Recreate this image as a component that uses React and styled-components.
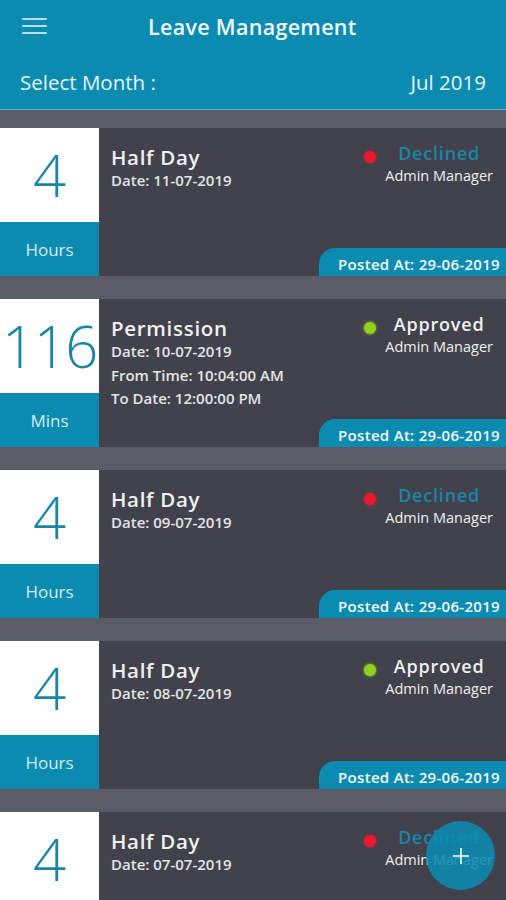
import React from "react";
import styled, { createGlobalStyle } from "styled-components";

const Global = createGlobalStyle`
  html, body { margin: 0; padding: 0; background: #5a5c67; }
  body { font-family: "Open Sans", "Noto Sans", sans-serif; overflow: hidden; }
  * { box-sizing: border-box; }
`;

const Page = styled.div`
  width: 506px;
  height: 900px;
  overflow: hidden;
  background: #5a5c67;
  position: relative;
`;

const Header = styled.header`
  background: #0b8bb0;
  border-bottom: 1px solid #5fb3cc;
`;

const TopBar = styled.div`
  height: 55px;
  display: flex;
  align-items: center;
  padding-left: 22px;
`;

const Burger = styled.div`
  width: 25px;
  display: flex;
  flex-direction: column;
  gap: 4.5px;
  margin-top: -3px;
  span {
    display: block;
    height: 2.5px;
    background: #bcdde8;
    border-radius: 1px;
  }
`;

const Title = styled.h1`
  margin: -2px 0 0 101px;
  font-size: 21.5px;
  font-weight: 600;
  color: #eef7fa;
  letter-spacing: 0.3px;
`;

const MonthRow = styled.div`
  height: 54px;
  display: flex;
  align-items: center;
  justify-content: space-between;
  padding: 0 20px 0 20px;
  color: #e6f3f7;
  font-size: 20.5px;
`;

const List = styled.div`
  display: flex;
  flex-direction: column;
  gap: 23px;
  padding-top: 18px;
`;

const Card = styled.div`
  height: 148px;
  display: flex;
  background: #41424c;
`;

const Amount = styled.div`
  width: 99px;
  display: flex;
  flex-direction: column;
`;

const Value = styled.div`
  height: 94px;
  background: #ffffff;
  color: #1b84a6;
  font-size: 58px;
  font-weight: 300;
  display: flex;
  align-items: center;
  justify-content: center;
  letter-spacing: ${(p) => (p.$long ? "-1.5px" : "0")};
  line-height: 1;
`;

const Unit = styled.div`
  flex: 1;
  background: #0b8bb0;
  color: #d5ebf2;
  font-size: 17px;
  display: flex;
  align-items: center;
  justify-content: center;
`;

const Body = styled.div`
  flex: 1;
  display: flex;
  flex-direction: column;
  padding: 16px 0 0 12px;
`;

const Top = styled.div`
  display: flex;
  justify-content: space-between;
  align-items: flex-start;
`;

const Info = styled.div`
  display: flex;
  flex-direction: column;
  color: #f1f1f1;
`;

const Kind = styled.div`
  font-size: 20.5px;
  font-weight: 600;
  letter-spacing: 0.7px;
  line-height: 26px;
`;

const Line = styled.div`
  font-size: 15px;
  font-weight: 600;
  color: #e4e4e6;
  line-height: 23.5px;
  margin-top: ${(p) => (p.$first ? "-1px" : "0")};
`;

const Status = styled.div`
  display: flex;
  align-items: flex-start;
  padding-right: 13px;
  margin-top: -4px;
`;

const Dot = styled.span`
  width: 12px;
  height: 12px;
  border-radius: 50%;
  background: ${(p) => p.$color};
  margin-top: 11px;
  margin-right: 9px;
  box-shadow: 0 0 3px ${(p) => p.$color};
`;

const StatusText = styled.div`
  display: flex;
  flex-direction: column;
  align-items: center;
`;

const StatusName = styled.div`
  font-size: 18px;
  font-weight: 600;
  letter-spacing: 0.8px;
  color: ${(p) => p.$color};
  line-height: 26px;
`;

const Manager = styled.div`
  font-size: 14.5px;
  color: #efefef;
  line-height: 20px;
`;

const Posted = styled.div`
  margin-top: auto;
  align-self: flex-end;
  height: 28px;
  padding: 3px 6px 0 19px;
  background: #0b8bb0;
  border-radius: 16px 0 0 0;
  color: #f2f9fb;
  font-size: 15px;
  font-weight: 600;
  letter-spacing: 0.3px;
  display: flex;
  align-items: center;
`;

const Fab = styled.button`
  position: absolute;
  right: 11px;
  bottom: 10px;
  width: 69px;
  height: 69px;
  border-radius: 50%;
  border: none;
  background: rgba(11, 139, 176, 0.88);
  display: flex;
  align-items: center;
  justify-content: center;
  padding: 0;
`;

const entries = [
  { value: "4", unit: "Hours", kind: "Half Day", lines: ["Date: 11-07-2019"], status: "Declined" },
  {
    value: "116",
    unit: "Mins",
    kind: "Permission",
    lines: ["Date: 10-07-2019", "From Time: 10:04:00 AM", "To Date: 12:00:00 PM"],
    status: "Approved",
  },
  { value: "4", unit: "Hours", kind: "Half Day", lines: ["Date: 09-07-2019"], status: "Declined" },
  { value: "4", unit: "Hours", kind: "Half Day", lines: ["Date: 08-07-2019"], status: "Approved" },
  { value: "4", unit: "Hours", kind: "Half Day", lines: ["Date: 07-07-2019"], status: "Declined" },
];

const statusStyle = {
  Declined: { dot: "#ec1a2f", text: "#1a86a8" },
  Approved: { dot: "#8fd11e", text: "#f0f0f0" },
};

export default function App() {
  return (
    <Page>
      <Global />
      <Header>
        <TopBar>
          <Burger>
            <span />
            <span />
            <span />
          </Burger>
          <Title>Leave Management</Title>
        </TopBar>
        <MonthRow>
          <span>Select Month :</span>
          <span>Jul 2019</span>
        </MonthRow>
      </Header>
      <List>
        {entries.map((e, i) => {
          const s = statusStyle[e.status];
          return (
            <Card key={i}>
              <Amount>
                <Value $long={e.value.length > 2}>{e.value}</Value>
                <Unit>{e.unit}</Unit>
              </Amount>
              <Body>
                <Top>
                  <Info>
                    <Kind>{e.kind}</Kind>
                    {e.lines.map((l, j) => (
                      <Line key={j} $first={j === 0}>
                        {l}
                      </Line>
                    ))}
                  </Info>
                  <Status>
                    <Dot $color={s.dot} />
                    <StatusText>
                      <StatusName $color={s.text}>{e.status}</StatusName>
                      <Manager>Admin Manager</Manager>
                    </StatusText>
                  </Status>
                </Top>
                <Posted>Posted At: 29-06-2019</Posted>
              </Body>
            </Card>
          );
        })}
      </List>
      <Fab aria-label="Add">
        <svg width="18" height="18" viewBox="0 0 18 18">
          <path d="M9 1v16M1 9h16" stroke="#ffffff" strokeWidth="1.6" />
        </svg>
      </Fab>
    </Page>
  );
}
